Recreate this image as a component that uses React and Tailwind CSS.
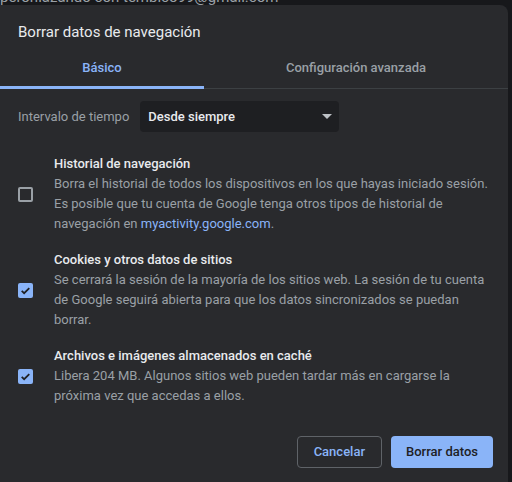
import { useState } from 'react';

const items = [
  {
    id: 'history',
    title: 'Historial de navegación',
    checked: false,
    desc: (
      <>
        Borra el historial de todos los dispositivos en los que hayas iniciado sesión. Es posible que tu cuenta de Google tenga otros tipos de historial de navegación en{' '}
        <span className="text-[#8ab4f8]">myactivity.google.com</span>.
      </>
    ),
  },
  {
    id: 'cookies',
    title: 'Cookies y otros datos de sitios',
    checked: true,
    desc: 'Se cerrará la sesión de la mayoría de los sitios web. La sesión de tu cuenta de Google seguirá abierta para que los datos sincronizados se puedan borrar.',
  },
  {
    id: 'cache',
    title: 'Archivos e imágenes almacenados en caché',
    checked: true,
    desc: 'Libera 204 MB. Algunos sitios web pueden tardar más en cargarse la próxima vez que accedas a ellos.',
  },
];

function Checkbox({ checked, onClick }) {
  return (
    <button
      onClick={onClick}
      className={`w-[15px] h-[15px] shrink-0 rounded-[2px] flex items-center justify-center ${
        checked ? 'bg-[#8ab4f8]' : 'border-2 border-[#9aa0a6]'
      }`}
    >
      {checked && (
        <svg viewBox="0 0 24 24" className="w-[13px] h-[13px]" fill="none" stroke="#202124" strokeWidth="3.2">
          <path d="M5 12.5l4.5 4.5L19 7.5" />
        </svg>
      )}
    </button>
  );
}

export default function App() {
  const [tab, setTab] = useState('basic');
  const [checks, setChecks] = useState(
    Object.fromEntries(items.map(i => [i.id, i.checked]))
  );

  return (
    <div className="w-[512px] h-[482px] overflow-hidden bg-[#17181b] font-['Roboto',sans-serif]">
      {/* page behind the dialog */}
      <div className="h-[5px] overflow-hidden flex">
        <div className="-mt-[12px] text-[15px] leading-[18px] text-[#9aa0a6] whitespace-nowrap">
          peroniazando con tembico99@gmail.com
        </div>
      </div>

      <div className="w-[508px] h-[477px] bg-[#292a2d] rounded-tr-lg flex flex-col">
        <h1 className="pl-[18px] pt-[16px] text-[15px] leading-[22px] text-[#e8eaed]">
          Borrar datos de navegación
        </h1>

        {/* Tabs */}
        <div className="mt-[6px] flex border-b border-[#3c4043]">
          <button
            onClick={() => setTab('basic')}
            className={`w-[204px] h-[40px] text-[13px] font-medium border-b-[3px] -mb-px ${
              tab === 'basic' ? 'text-[#8ab4f8] border-[#8ab4f8]' : 'text-[#9aa0a6] border-transparent'
            }`}
          >
            Básico
          </button>
          <button
            onClick={() => setTab('advanced')}
            className={`flex-1 h-[40px] text-[13px] font-medium border-b-[3px] -mb-px ${
              tab === 'advanced' ? 'text-[#8ab4f8] border-[#8ab4f8]' : 'text-[#9aa0a6] border-transparent'
            }`}
          >
            Configuración avanzada
          </button>
        </div>

        {/* Time range */}
        <div className="mt-[12px] pl-[18px] flex items-center gap-[11px]">
          <span className="text-[13px] text-[#9aa0a6]">Intervalo de tiempo</span>
          <div className="w-[199px] h-[31px] bg-[#1e1f22] rounded-[4px] flex items-center justify-between pl-[8px] pr-[7px]">
            <span className="text-[13px] font-medium text-[#e8eaed]">Desde siempre</span>
            <svg viewBox="0 0 10 5" className="w-[10px] h-[5px]">
              <path d="M0 0h10L5 5z" fill="#bdc1c6" />
            </svg>
          </div>
        </div>

        {/* Options */}
        <div className="mt-[22px] flex flex-col gap-[16px]">
          {items.map(item => (
            <div key={item.id} className="flex items-center pl-[18px] pr-[16px]">
              <div className="w-[36px] shrink-0 flex">
                <Checkbox
                  checked={checks[item.id]}
                  onClick={() => setChecks(prev => ({ ...prev, [item.id]: !prev[item.id] }))}
                />
              </div>
              <div className="flex-1">
                <div className="text-[13px] font-medium leading-[20px] text-[#e8eaed]">{item.title}</div>
                <div className="text-[13px] leading-[20px] text-[#9aa0a6]">{item.desc}</div>
              </div>
            </div>
          ))}
        </div>

        {/* Buttons */}
        <div className="mt-auto mb-[14px] pr-[15px] flex justify-end gap-[9px]">
          <button className="h-[32px] px-[16px] rounded-[4px] border border-[#5f6368] text-[13px] font-medium text-[#8ab4f8]">
            Cancelar
          </button>
          <button className="h-[32px] px-[15px] rounded-[4px] bg-[#8ab4f8] text-[13px] font-medium text-[#202124]">
            Borrar datos
          </button>
        </div>
      </div>
    </div>
  );
}
